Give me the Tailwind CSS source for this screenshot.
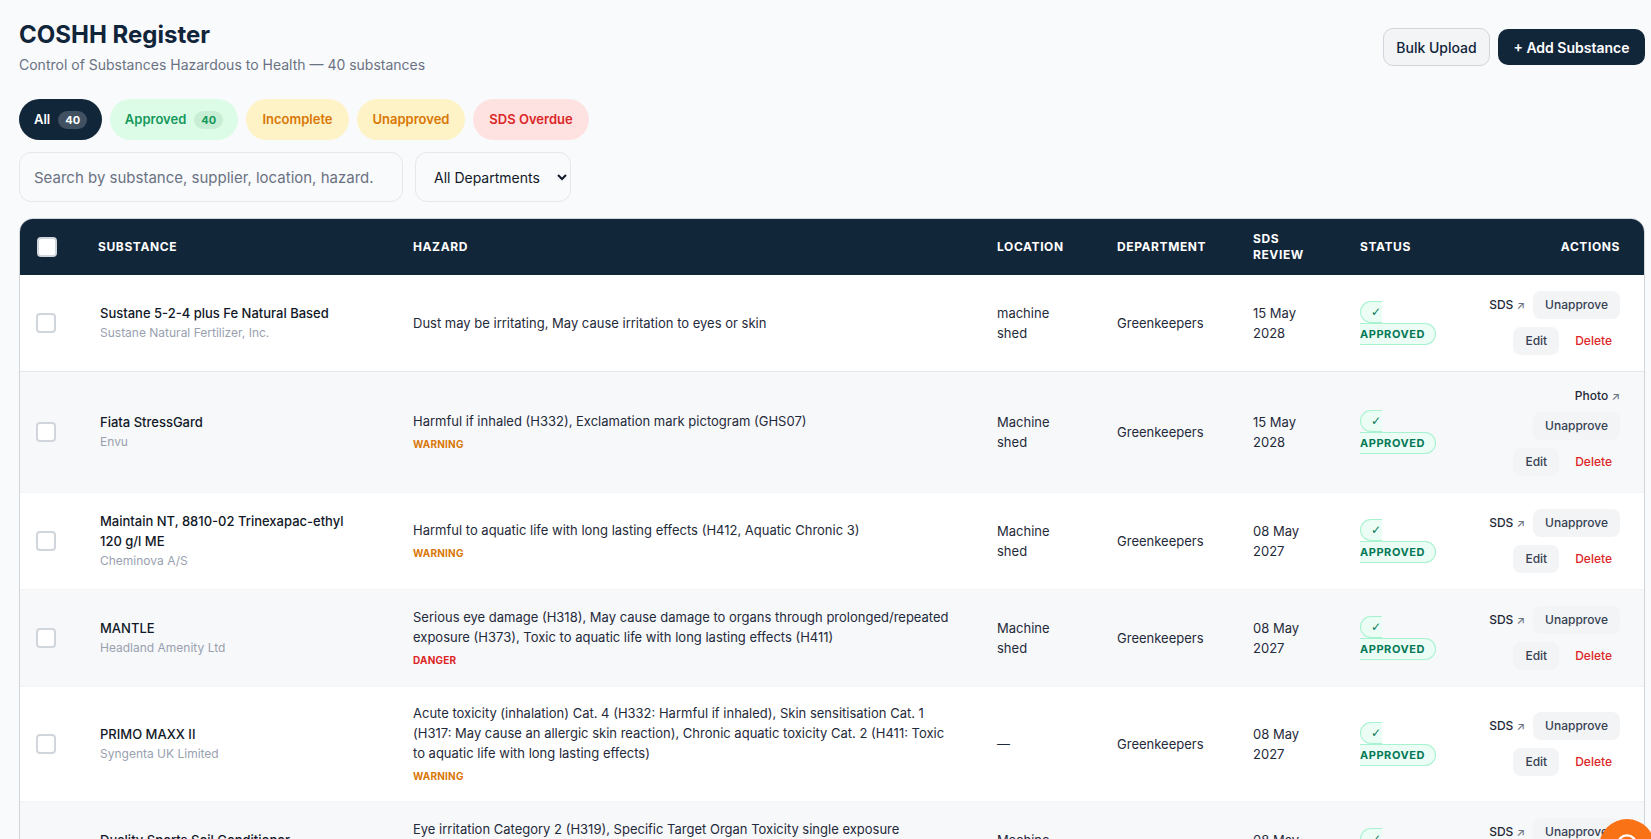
<!DOCTYPE html>
<html lang="en">
<head>
    <meta charset="UTF-8">
    <meta name="viewport" content="width=device-width, initial-scale=1.0">
    <title>COSHH Register</title>
    <script src="https://cdn.jsdelivr.net/npm/@tailwindcss/browser@4"></script>
</head>
<body class="h-screen overflow-hidden bg-[#f9fafc] font-['Inter',sans-serif] text-[#111827]">
    <div class="w-[1645px] pl-[19px] pt-[21px]">
        <!-- page header -->
        <div class="flex items-start justify-between">
            <div>
                <h1 class="text-[24px] leading-[28px] font-bold text-[#10243a]">COSHH Register</h1>
                <p class="mt-[6px] text-[14px] leading-5 text-gray-500">Control of Substances Hazardous to Health — 40 substances</p>
            </div>
            <div class="mt-[7px] flex items-center gap-2">
                <button class="h-[38px] w-[107px] rounded-[10px] border border-gray-300 bg-gray-100 text-[14px] font-medium text-[#10243a]">Bulk Upload</button>
                <button class="h-[36px] w-[147px] rounded-[10px] bg-[#12263a] text-[14px] font-semibold text-white">+ Add Substance</button>
            </div>
        </div>

        <!-- status pills -->
        <div class="mt-[24px] flex gap-2">
            <button class="flex h-[41px] w-[83px] items-center justify-center gap-2 rounded-full bg-[#12263a] text-[13px] font-semibold text-white">All <span class="rounded-full bg-white/20 px-[7px] text-[11px] leading-[18px] font-bold">40</span></button>
            <button class="flex h-[41px] w-[128px] items-center justify-center gap-2 rounded-full bg-[#dcfce7] text-[13px] font-semibold text-[#15985c]">Approved <span class="rounded-full bg-[#c9eed6] px-[7px] text-[11px] leading-[18px] font-bold">40</span></button>
            <button class="h-[41px] w-[103px] rounded-full bg-[#fef3c7] text-[13px] font-semibold text-[#d97706]">Incomplete</button>
            <button class="h-[41px] w-[108px] rounded-full bg-[#fef3c7] text-[13px] font-semibold text-[#d97706]">Unapproved</button>
            <button class="h-[41px] w-[116px] rounded-full bg-[#fee2e2] text-[13px] font-semibold text-[#dc2626]">SDS Overdue</button>
        </div>

        <!-- filters -->
        <div class="mt-[12px] flex gap-3">
            <input class="h-[50px] w-[384px] rounded-xl border border-gray-200 bg-transparent pr-[28px] pl-[14px] text-[15px] placeholder:text-gray-500" placeholder="Search by substance, supplier, location, hazard...">
            <select class="h-[50px] w-[156px] rounded-xl border border-gray-200 bg-transparent pl-[14px] text-[14px] text-[#111827]">
                <option>All Departments</option>
            </select>
        </div>

        <!-- register table -->
        <div class="mt-[16px] overflow-hidden rounded-[14px] border border-gray-300 bg-white">
            <table class="w-full table-fixed border-collapse text-[13px] leading-5 text-[#1f2a3a]">
                <colgroup>
                    <col class="w-[62px]"><col class="w-[315px]"><col class="w-[584px]"><col class="w-[120px]"><col class="w-[136px]"><col class="w-[107px]"><col class="w-[125px]"><col class="w-[175px]">
                </colgroup>
                <thead class="bg-[#12263a] text-left text-[12px] leading-4 font-bold tracking-[0.05em] text-white uppercase">
                    <tr class="h-[56px]">
                        <th class="pl-[17px]"><input type="checkbox" class="block h-5 w-5 appearance-none rounded-[4px] border-2 border-gray-300 bg-white"></th>
                        <th class="px-4 font-bold">Substance</th>
                        <th class="px-4 font-bold">Hazard</th>
                        <th class="px-4 font-bold">Location</th>
                        <th class="px-4 font-bold">Department</th>
                        <th class="px-4 font-bold">SDS Review</th>
                        <th class="px-4 font-bold">Status</th>
                        <th class="pr-6 text-right font-bold">Actions</th>
                    </tr>
                </thead>
                <tbody>
                    <tr class="border-b border-gray-200 bg-white">
                        <td class="pl-4"><input type="checkbox" class="block h-5 w-5 appearance-none rounded-[4px] border-2 border-gray-300 bg-white"></td>
                        <td class="py-4 pr-4 pl-[18px]"><div class="max-w-[260px] font-medium text-[#111827]">Sustane 5-2-4 plus Fe Natural Based</div><div class="text-[12px] text-gray-400">Sustane Natural Fertilizer, Inc.</div></td>
                        <td class="py-4 pr-7 pl-4">Dust may be irritating, May cause irritation to eyes or skin</td>
                        <td class="py-4 pr-9 pl-4">machine shed</td>
                        <td class="px-4 py-4">Greenkeepers</td>
                        <td class="px-4 py-4">15 May 2028</td>
                        <td class="px-4 py-4"><span class="rounded-full border border-[#a7f3d0] bg-[#ecfdf5] px-[10px] py-[3px] text-[11px] leading-[22px] font-bold tracking-[0.05em] text-[#047857]"><span class="font-['DejaVu_Sans'] text-[12px]">✓</span> APPROVED</span></td>
                        <td class="py-4 pr-6 pl-4">
                            <div class="flex flex-wrap items-center justify-end gap-2 text-[12px]">
                                <a class="font-medium text-[#1f2937]">SDS <span class="text-[11px] text-gray-500">↗</span></a>
                                <button class="h-7 rounded-lg bg-gray-100 px-3 font-medium text-gray-700">Unapprove</button>
                                <button class="h-7 rounded-lg bg-gray-100 px-3 font-medium text-gray-700">Edit</button>
                                <button class="h-7 rounded-lg px-2 font-medium text-[#dc2626]">Delete</button>
                            </div>
                        </td>
                    </tr>
                    <tr class="border-b border-gray-100 bg-[#f7f8fa]">
                        <td class="pl-4"><input type="checkbox" class="block h-5 w-5 appearance-none rounded-[4px] border-2 border-gray-300 bg-white"></td>
                        <td class="py-4 pr-4 pl-[18px]"><div class="max-w-[260px] font-medium text-[#111827]">Fiata StressGard</div><div class="text-[12px] text-gray-400">Envu</div></td>
                        <td class="py-4 pr-7 pl-4">Harmful if inhaled (H332), Exclamation mark pictogram (GHS07)<div class="mt-1 text-[10px] leading-[18px] font-bold tracking-[0.02em] text-[#d97706]">WARNING</div></td>
                        <td class="py-4 pr-9 pl-4">Machine shed</td>
                        <td class="px-4 py-4">Greenkeepers</td>
                        <td class="px-4 py-4">15 May 2028</td>
                        <td class="px-4 py-4"><span class="rounded-full border border-[#a7f3d0] bg-[#ecfdf5] px-[10px] py-[3px] text-[11px] leading-[22px] font-bold tracking-[0.05em] text-[#047857]"><span class="font-['DejaVu_Sans'] text-[12px]">✓</span> APPROVED</span></td>
                        <td class="py-4 pr-6 pl-4">
                            <div class="flex flex-wrap items-center justify-end gap-2 text-[12px]">
                                <a class="leading-4 font-medium text-[#1f2937]">Photo <span class="text-[11px] text-gray-500">↗</span></a>
                                <button class="h-7 rounded-lg bg-gray-100 px-3 font-medium text-gray-700">Unapprove</button>
                                <button class="h-7 rounded-lg bg-gray-100 px-3 font-medium text-gray-700">Edit</button>
                                <button class="h-7 rounded-lg px-2 font-medium text-[#dc2626]">Delete</button>
                            </div>
                        </td>
                    </tr>
                    <tr class="border-b border-gray-100 bg-white">
                        <td class="pl-4"><input type="checkbox" class="block h-5 w-5 appearance-none rounded-[4px] border-2 border-gray-300 bg-white"></td>
                        <td class="py-4 pr-4 pl-[18px]"><div class="max-w-[260px] font-medium text-[#111827]">Maintain NT, 8810-02 Trinexapac-ethyl 120 g/l ME</div><div class="text-[12px] text-gray-400">Cheminova A/S</div></td>
                        <td class="py-4 pr-7 pl-4">Harmful to aquatic life with long lasting effects (H412, Aquatic Chronic 3)<div class="mt-1 text-[10px] leading-[18px] font-bold tracking-[0.02em] text-[#d97706]">WARNING</div></td>
                        <td class="py-4 pr-9 pl-4">Machine shed</td>
                        <td class="px-4 py-4">Greenkeepers</td>
                        <td class="px-4 py-4">08 May 2027</td>
                        <td class="px-4 py-4"><span class="rounded-full border border-[#a7f3d0] bg-[#ecfdf5] px-[10px] py-[3px] text-[11px] leading-[22px] font-bold tracking-[0.05em] text-[#047857]"><span class="font-['DejaVu_Sans'] text-[12px]">✓</span> APPROVED</span></td>
                        <td class="py-4 pr-6 pl-4">
                            <div class="flex flex-wrap items-center justify-end gap-2 text-[12px]">
                                <a class="font-medium text-[#1f2937]">SDS <span class="text-[11px] text-gray-500">↗</span></a>
                                <button class="h-7 rounded-lg bg-gray-100 px-3 font-medium text-gray-700">Unapprove</button>
                                <button class="h-7 rounded-lg bg-gray-100 px-3 font-medium text-gray-700">Edit</button>
                                <button class="h-7 rounded-lg px-2 font-medium text-[#dc2626]">Delete</button>
                            </div>
                        </td>
                    </tr>
                    <tr class="border-b border-gray-100 bg-[#f7f8fa]">
                        <td class="pl-4"><input type="checkbox" class="block h-5 w-5 appearance-none rounded-[4px] border-2 border-gray-300 bg-white"></td>
                        <td class="py-4 pr-4 pl-[18px]"><div class="max-w-[260px] font-medium text-[#111827]">MANTLE</div><div class="text-[12px] text-gray-400">Headland Amenity Ltd</div></td>
                        <td class="py-4 pr-7 pl-4">Serious eye damage (H318), May cause damage to organs through prolonged/repeated exposure (H373), Toxic to aquatic life with long lasting effects (H411)<div class="mt-1 text-[10px] leading-[18px] font-bold tracking-[0.02em] text-[#dc2626]">DANGER</div></td>
                        <td class="py-4 pr-9 pl-4">Machine shed</td>
                        <td class="px-4 py-4">Greenkeepers</td>
                        <td class="px-4 py-4">08 May 2027</td>
                        <td class="px-4 py-4"><span class="rounded-full border border-[#a7f3d0] bg-[#ecfdf5] px-[10px] py-[3px] text-[11px] leading-[22px] font-bold tracking-[0.05em] text-[#047857]"><span class="font-['DejaVu_Sans'] text-[12px]">✓</span> APPROVED</span></td>
                        <td class="py-4 pr-6 pl-4">
                            <div class="flex flex-wrap items-center justify-end gap-2 text-[12px]">
                                <a class="font-medium text-[#1f2937]">SDS <span class="text-[11px] text-gray-500">↗</span></a>
                                <button class="h-7 rounded-lg bg-gray-100 px-3 font-medium text-gray-700">Unapprove</button>
                                <button class="h-7 rounded-lg bg-gray-100 px-3 font-medium text-gray-700">Edit</button>
                                <button class="h-7 rounded-lg px-2 font-medium text-[#dc2626]">Delete</button>
                            </div>
                        </td>
                    </tr>
                    <tr class="border-b border-gray-100 bg-white">
                        <td class="pl-4"><input type="checkbox" class="block h-5 w-5 appearance-none rounded-[4px] border-2 border-gray-300 bg-white"></td>
                        <td class="py-4 pr-4 pl-[18px]"><div class="max-w-[260px] font-medium text-[#111827]">PRIMO MAXX II</div><div class="text-[12px] text-gray-400">Syngenta UK Limited</div></td>
                        <td class="py-4 pr-7 pl-4">Acute toxicity (inhalation) Cat. 4 (H332: Harmful if inhaled), Skin sensitisation Cat. 1 (H317: May cause an allergic skin reaction), Chronic aquatic toxicity Cat. 2 (H411: Toxic to aquatic life with long lasting effects)<div class="mt-1 text-[10px] leading-[18px] font-bold tracking-[0.02em] text-[#d97706]">WARNING</div></td>
                        <td class="py-4 pr-9 pl-4">—</td>
                        <td class="px-4 py-4">Greenkeepers</td>
                        <td class="px-4 py-4">08 May 2027</td>
                        <td class="px-4 py-4"><span class="rounded-full border border-[#a7f3d0] bg-[#ecfdf5] px-[10px] py-[3px] text-[11px] leading-[22px] font-bold tracking-[0.05em] text-[#047857]"><span class="font-['DejaVu_Sans'] text-[12px]">✓</span> APPROVED</span></td>
                        <td class="py-4 pr-6 pl-4">
                            <div class="flex flex-wrap items-center justify-end gap-2 text-[12px]">
                                <a class="font-medium text-[#1f2937]">SDS <span class="text-[11px] text-gray-500">↗</span></a>
                                <button class="h-7 rounded-lg bg-gray-100 px-3 font-medium text-gray-700">Unapprove</button>
                                <button class="h-7 rounded-lg bg-gray-100 px-3 font-medium text-gray-700">Edit</button>
                                <button class="h-7 rounded-lg px-2 font-medium text-[#dc2626]">Delete</button>
                            </div>
                        </td>
                    </tr>
                    <tr class="border-b border-gray-100 bg-[#f7f8fa]">
                        <td class="pl-4"><input type="checkbox" class="block h-5 w-5 appearance-none rounded-[4px] border-2 border-gray-300 bg-white"></td>
                        <td class="py-4 pr-4 pl-[18px]"><div class="max-w-[260px] font-medium text-[#111827]">Duality Sports Soil Conditioner</div><div class="text-[12px] text-gray-400">Headland Amenity Ltd</div></td>
                        <td class="py-4 pr-7 pl-4">Eye irritation Category 2 (H319), Specific Target Organ Toxicity single exposure Category 3 (H335)<div class="mt-1 text-[10px] leading-[18px] font-bold tracking-[0.02em] text-[#d97706]">WARNING</div></td>
                        <td class="py-4 pr-9 pl-4">Machine shed</td>
                        <td class="px-4 py-4">Greenkeepers</td>
                        <td class="px-4 py-4">08 May 2027</td>
                        <td class="px-4 py-4"><span class="rounded-full border border-[#a7f3d0] bg-[#ecfdf5] px-[10px] py-[3px] text-[11px] leading-[22px] font-bold tracking-[0.05em] text-[#047857]"><span class="font-['DejaVu_Sans'] text-[12px]">✓</span> APPROVED</span></td>
                        <td class="py-4 pr-6 pl-4">
                            <div class="flex flex-wrap items-center justify-end gap-2 text-[12px]">
                                <a class="font-medium text-[#1f2937]">SDS <span class="text-[11px] text-gray-500">↗</span></a>
                                <button class="h-7 rounded-lg bg-gray-100 px-3 font-medium text-gray-700">Unapprove</button>
                                <button class="h-7 rounded-lg bg-gray-100 px-3 font-medium text-gray-700">Edit</button>
                                <button class="h-7 rounded-lg px-2 font-medium text-[#dc2626]">Delete</button>
                            </div>
                        </td>
                    </tr>
                </tbody>
            </table>
        </div>
    </div>

    <!-- chat button, mostly below the fold -->
    <button class="fixed top-[819px] left-[1599px] flex h-14 w-14 justify-center rounded-full bg-[#f97316] pt-[14px] shadow-lg">
        <svg class="h-7 w-7" viewBox="0 0 24 24" fill="none" stroke="white" stroke-width="2"><circle cx="12" cy="10" r="8"/><circle cx="12" cy="10" r="3"/></svg>
    </button>
</body>
</html>
